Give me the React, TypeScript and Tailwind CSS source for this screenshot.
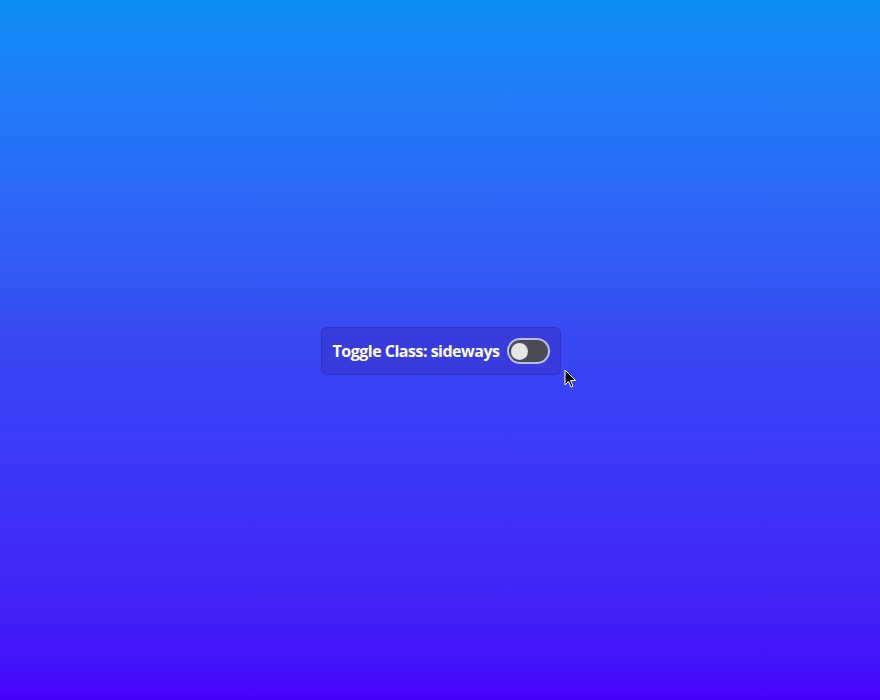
import React from 'react';

const App = () => {
  return (
    <div className="min-h-screen w-full flex items-center justify-center bg-gradient-to-b from-[#0a8ef8] via-[#3846f5] to-[#4500fa] font-['Open_Sans',sans-serif]">
      <div className="relative flex items-center gap-2 h-[48px] pl-[11px] pr-[10px] rounded-md bg-[#3a3ad6]/80 border border-[#2f33c4] mt-[2px] ml-[2px]">
        <span className="text-white font-bold text-[16px] tracking-[-0.5px]">Toggle Class: sideways</span>
        <button className="flex items-center w-[43px] h-[26px] rounded-full bg-[#4a4b57] border-2 border-[#b9bdf0] px-[2px]">
          <span className="w-[17px] h-[17px] rounded-full bg-[#e6e6e6]" />
        </button>
        {/* mouse pointer */}
        <svg className="absolute left-[242px] top-[41px]" width="13" height="20" viewBox="0 0 13 20">
          <path d="M1 1 L1 16 L4.5 12.5 L7 18 L9 17 L6.5 11.5 L11.5 11.5 Z" fill="#000" stroke="#fff" strokeWidth="1" />
        </svg>
      </div>
    </div>
  );
};

export default App;
